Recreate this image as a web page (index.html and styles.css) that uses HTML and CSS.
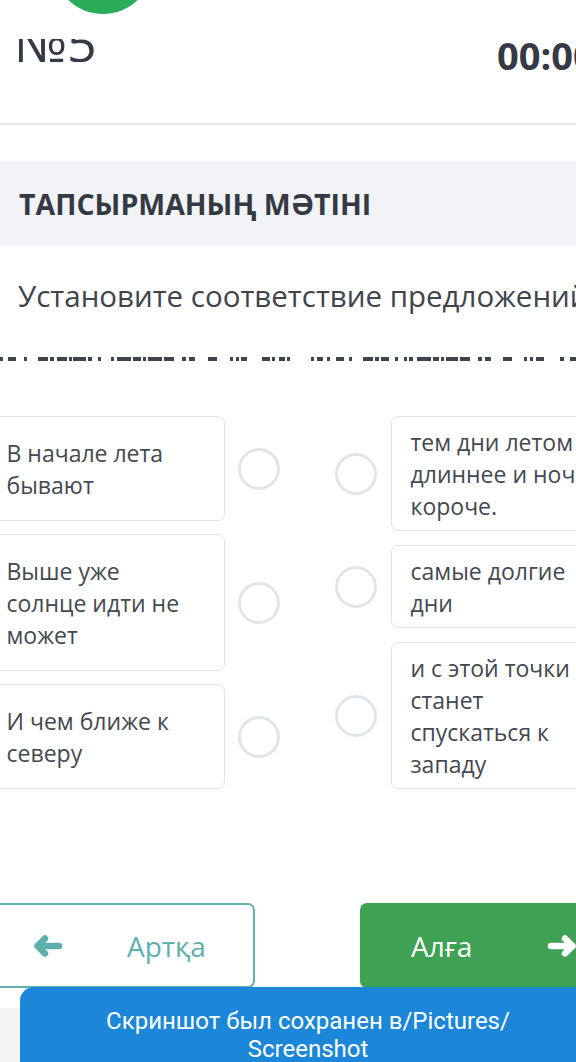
FILE: index.html
```html
<!DOCTYPE html>
<html lang="ru">
<head>
<meta charset="utf-8">
<title>Тапсырма №5</title>
<link rel="stylesheet" href="styles.css">
</head>
<body>
<div class="page">
  <header class="top">
    <div class="avatar"></div>
    <div class="top-row">
      <div class="num-clip"><span class="num">№5</span></div>
      <div class="timer">00:00</div>
    </div>
  </header>

  <section class="task-head">ТАПСЫРМАНЫҢ МӘТІНІ</section>

  <p class="task-text">Установите соответствие предложений</p>

  <svg class="dashes" width="576" height="4" viewBox="0 0 576 4" aria-hidden="true">
    <g fill="#3e434d">
      <rect x="0" y="0" width="3" height="4"/><rect x="8" y="0" width="8" height="4"/><rect x="24" y="0" width="3" height="4"/>
      <rect x="38" y="0" width="10" height="4"/><rect x="50" y="0" width="4" height="4"/><rect x="57" y="0" width="10" height="4"/>
      <rect x="69" y="0" width="3" height="4"/><rect x="73" y="0" width="13" height="4"/><rect x="88" y="0" width="4" height="4"/>
      <rect x="98" y="0" width="3" height="4"/><rect x="111" y="0" width="3" height="4"/><rect x="117" y="0" width="14" height="4"/>
      <rect x="133" y="0" width="8" height="4"/><rect x="143" y="0" width="3" height="4"/><rect x="148" y="0" width="14" height="4"/>
      <rect x="164" y="0" width="10" height="4"/><rect x="182" y="0" width="4" height="4"/><rect x="189" y="0" width="6" height="4"/>
      <rect x="208" y="0" width="9" height="4"/><rect x="230" y="0" width="3" height="4"/><rect x="236" y="0" width="3" height="4"/>
      <rect x="241" y="0" width="6" height="4"/><rect x="262" y="0" width="8" height="4"/><rect x="272" y="0" width="3" height="4"/>
      <rect x="279" y="0" width="6" height="4"/><rect x="287" y="0" width="3" height="4"/>
      <rect x="311" y="0" width="3" height="4"/><rect x="317" y="0" width="6" height="4"/><rect x="327" y="0" width="3" height="4"/>
      <rect x="336" y="0" width="8" height="4"/><rect x="349" y="0" width="3" height="4"/><rect x="363" y="0" width="10" height="4"/>
      <rect x="375" y="0" width="4" height="4"/><rect x="381" y="0" width="8" height="4"/><rect x="395" y="0" width="3" height="4"/>
      <rect x="404" y="0" width="3" height="4"/><rect x="409" y="0" width="4" height="4"/><rect x="417" y="0" width="14" height="4"/>
      <rect x="433" y="0" width="6" height="4"/><rect x="441" y="0" width="3" height="4"/><rect x="446" y="0" width="12" height="4"/>
      <rect x="460" y="0" width="10" height="4"/><rect x="478" y="0" width="4" height="4"/><rect x="485" y="0" width="6" height="4"/>
      <rect x="503" y="0" width="9" height="4"/><rect x="524" y="0" width="3" height="4"/><rect x="530" y="0" width="3" height="4"/>
      <rect x="536" y="0" width="8" height="4"/><rect x="560" y="0" width="4" height="4"/><rect x="570" y="0" width="6" height="4"/>
    </g>
  </svg>

  <section class="match">
    <div class="col col-left">
      <div class="item"><div class="card card-l">В начале лета бывают</div><span class="dot"></span></div>
      <div class="item"><div class="card card-l">Выше уже солнце идти не может</div><span class="dot"></span></div>
      <div class="item"><div class="card card-l">И чем ближе к северу</div><span class="dot"></span></div>
    </div>
    <div class="col col-right">
      <div class="item"><span class="dot"></span><div class="card card-r">тем дни летом длиннее и ночи короче.</div></div>
      <div class="item"><span class="dot"></span><div class="card card-r">самые долгие дни</div></div>
      <div class="item"><span class="dot"></span><div class="card card-r">и с этой точки станет спускаться к западу</div></div>
    </div>
  </section>

  <nav class="nav">
    <button class="btn btn-back" type="button">
      <svg class="arrow" width="30" height="24" viewBox="0 0 30 24" aria-hidden="true"><path d="M12 4.5 L4.5 12 L12 19.5 M4.5 12 H26" fill="none" stroke="#5bb0ad" stroke-width="6.5" stroke-linecap="round" stroke-linejoin="round"/></svg>
      <span class="btn-label">Артқа</span>
    </button>
    <button class="btn btn-next" type="button">
      <span class="btn-label">Алға</span>
      <svg class="arrow" width="30" height="24" viewBox="0 0 30 24" aria-hidden="true"><path d="M18 4.5 L25.5 12 L18 19.5 M25.5 12 H4" fill="none" stroke="#ffffff" stroke-width="6.5" stroke-linecap="round" stroke-linejoin="round"/></svg>
    </button>
  </nav>
  <div class="bottom-strip"></div>

  <div class="toast">Скриншот был сохранен в/Pictures/<br>Screenshot</div>
</div>
</body>
</html>
```

FILE: styles.css
```css
html, body {
  margin: 0;
  padding: 0;
  background: #ffffff;
}
body {
  width: 576px;
  height: 1062px;
  overflow: hidden;
  font-family: "Open Sans", "Noto Sans", sans-serif;
  color: #3c414b;
}
.page {
  position: relative;
  width: 576px;
  height: 1062px;
  overflow: hidden;
}

/* header */
.top {
  display: flow-root;
  height: 123px;
  border-bottom: 2px solid #e4e4e4;
}
.avatar {
  width: 100px;
  height: 100px;
  border-radius: 50%;
  background: #2aac5b;
  margin: -86px 0 0 53px;
}
.top-row {
  display: flex;
  margin-top: 25px;
}
.num-clip {
  flex: 0 0 497px;
  box-sizing: border-box;
  padding-left: 14px;
  height: 23px;
  overflow: hidden;
}
.num {
  display: block;
  font-size: 52px;
  line-height: 52px;
  margin-top: -23px;
  color: #353a45;
}
.timer {
  flex-shrink: 0;
  white-space: nowrap;
  font-size: 38px;
  line-height: 38px;
  font-weight: 700;
  color: #353a45;
  margin-top: -3px;
}

/* task header */
.task-head {
  margin-top: 36px;
  height: 85px;
  background: #f2f3f6;
  display: flex;
  align-items: center;
  padding-left: 19px;
  font-size: 28.5px;
  font-weight: 700;
  color: #343944;
}
.task-text {
  margin: 0;
  padding: 30px 0 0 18px;
  font-size: 29.5px;
  line-height: 40px;
  white-space: nowrap;
  color: #3f444d;
}
.dashes {
  display: block;
  margin-top: 41px;
}

/* matching */
.match {
  display: flex;
  align-items: flex-start;
  gap: 55px;
  margin-left: -13px;
  margin-top: 55px;
}
.col {
  display: flex;
  flex-direction: column;
}
.col-left { gap: 13px; }
.col-right { gap: 14px; }
.item {
  display: flex;
  align-items: center;
}
.col-left .item { gap: 13px; }
.col-right .item { gap: 14px; }
.card {
  box-sizing: border-box;
  border: 1.5px solid #e2e3e5;
  border-radius: 7px;
  font-size: 23px;
  line-height: 32px;
  color: #444950;
  background: #fff;
}
.card-l {
  width: 238px;
  padding: 19.5px 36px 19.5px 18.5px;
}
.card-r {
  width: 224px;
  flex-shrink: 0;
  padding: 8.5px 20px 8.5px 18.5px;
}
.dot {
  flex-shrink: 0;
  width: 42px;
  height: 42px;
  box-sizing: border-box;
  border: 3px solid #e1e4e8;
  border-radius: 50%;
}

/* nav buttons */
.nav {
  display: flex;
  justify-content: space-between;
  margin-top: 114px;
  height: 85px;
}
.btn {
  box-sizing: border-box;
  height: 85px;
  border-radius: 7px;
  display: flex;
  align-items: center;
  font-family: "Open Sans", "Noto Sans", sans-serif;
  font-size: 28px;
  padding: 0;
  flex-shrink: 0;
}
.btn-back {
  margin-left: -10px;
  width: 265px;
  border: 2px solid #62b1b4;
  background: #fff;
  color: #5eb0ad;
  padding-left: 41px;
}
.btn-back .btn-label { margin-left: 64px; }
.btn-next {
  width: 260px;
  margin-right: -44px;
  border: none;
  background: #3fa153;
  color: #ffffff;
  padding-left: 51px;
}
.btn-next .arrow { margin-left: 75px; }
.bottom-strip {
  margin-top: 20px;
  height: 60px;
  background: #f3f4f5;
}

/* toast overlay */
.toast {
  position: absolute;
  left: 20px;
  top: 987px;
  width: 576px;
  height: 90px;
  box-sizing: border-box;
  padding-top: 20px;
  border-radius: 14px 14px 0 0;
  background: #1c87d8;
  color: #ffffff;
  font-family: Roboto, "Noto Sans", sans-serif;
  font-size: 24px;
  line-height: 28px;
  text-align: center;
}
```
